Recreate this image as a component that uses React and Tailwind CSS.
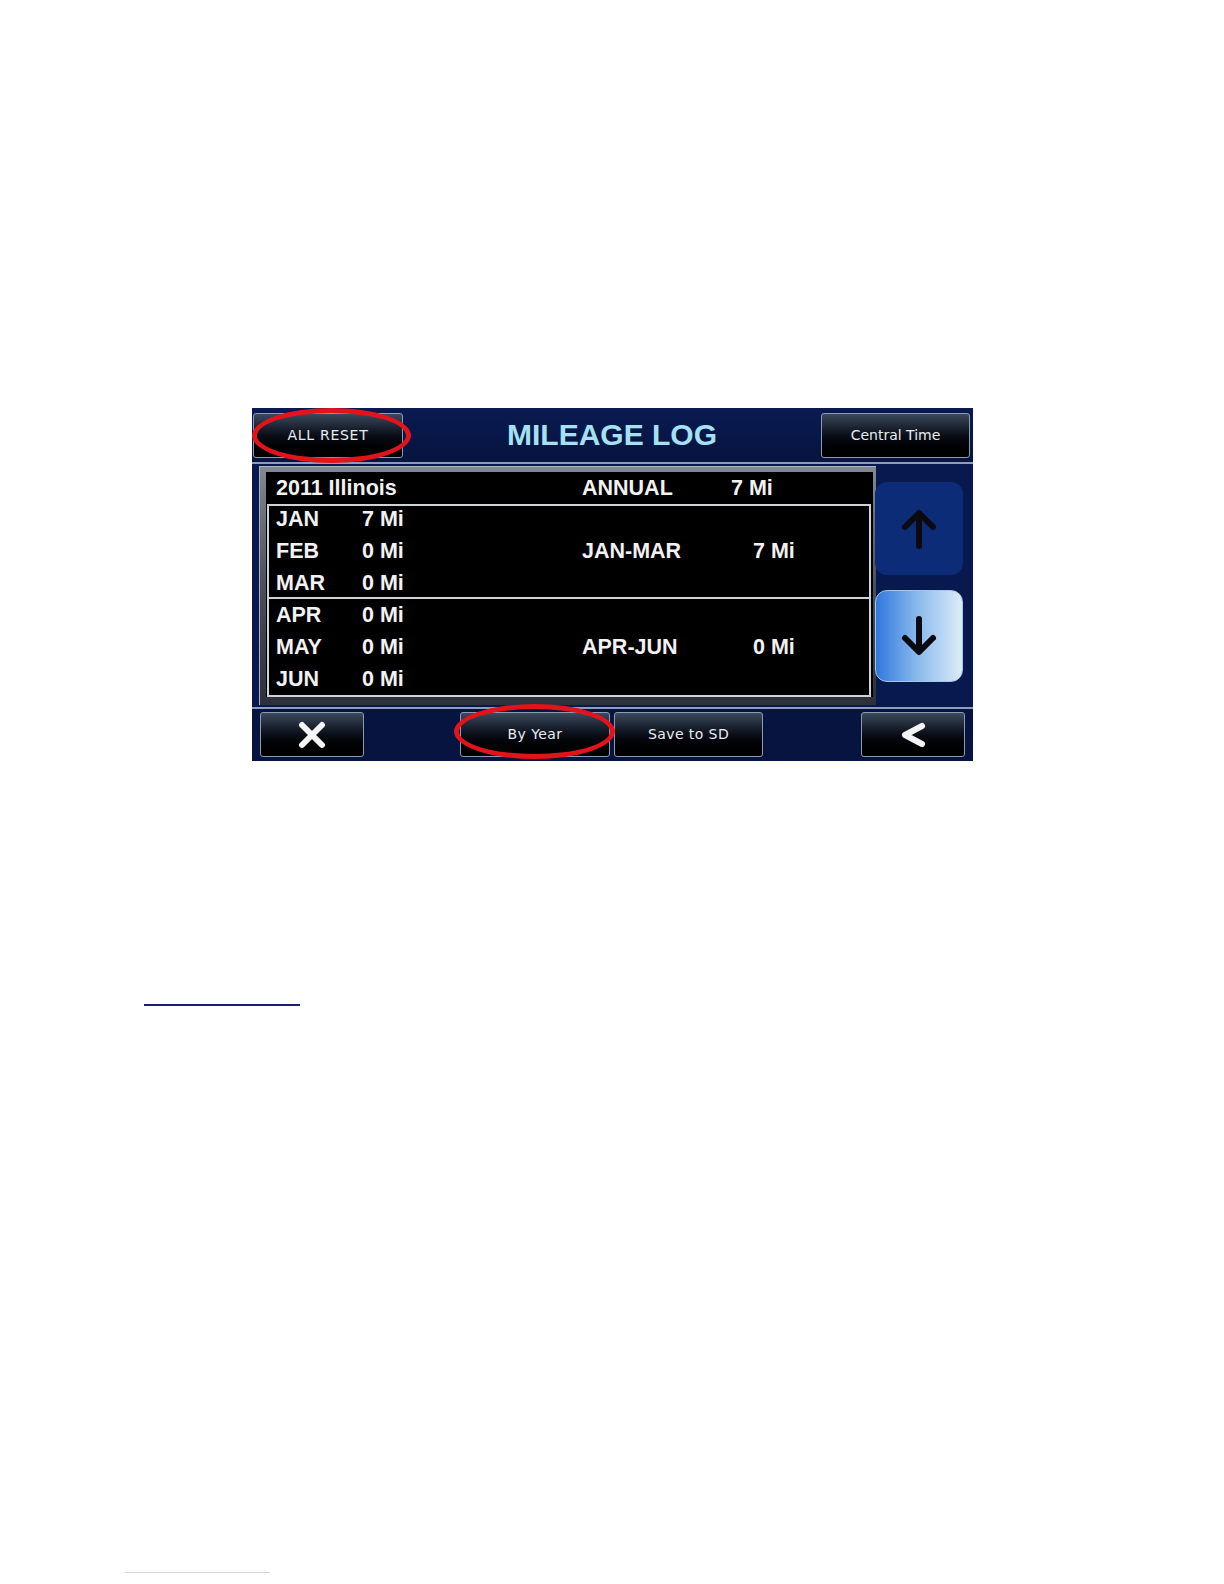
import React from 'react';

const btnFont = { fontFamily: '"DejaVu Sans", "Liberation Sans", sans-serif' };
const tableFont = { fontFamily: '"Liberation Sans", Arial, sans-serif' };

const GlossButton = ({ className = '', children }) => (
    <div
        className={`flex items-center justify-center h-[45px] rounded-[3px] border border-[#8c9ab2] bg-gradient-to-b from-[#3c4a5e] via-[#0a0f18] to-black text-[#e8ecf0] text-[14px] ${className}`}
        style={btnFont}
    >
        {children}
    </div>
);

const Row = ({ month, value }) => (
    <div className="flex items-center h-[32px]">
        <span className="w-[86px]">{month}</span>
        <span>{value}</span>
    </div>
);

const Group = ({ rows, label, total, last }) => (
    <div className={`flex items-start ${last ? 'flex-1 pt-[3px]' : 'h-[93px] border-b-2 border-[#cfd2d6]'}`}>
        <div className="w-[313px] pl-[7px] -mt-[3px]">
            {rows.map(r => <Row key={r[0]} month={r[0]} value={r[1]} />)}
        </div>
        <span className="w-[171px] h-[32px] mt-[29px] flex items-center">{label}</span>
        <span className="h-[32px] mt-[29px] flex items-center">{total}</span>
    </div>
);

const ArrowIcon = ({ down }) => (
    <svg width="40" height="42" viewBox="0 0 40 42" fill="none" stroke="#0a0a10" strokeWidth="6" strokeLinecap="round" strokeLinejoin="round">
        {down ? (
            <>
                <path d="M20 4 V36" />
                <path d="M6 23 L20 37 L34 23" />
            </>
        ) : (
            <>
                <path d="M20 38 V6" />
                <path d="M6 19 L20 5 L34 19" />
            </>
        )}
    </svg>
);

export default function App() {
    return (
        <div className="relative min-h-[1584px] bg-white pt-[408px]">
            {/* Device screen */}
            <div className="relative ml-[252px] w-[721px] h-[353px] flex flex-col bg-[#08174c]">
                {/* Top bar */}
                <div className="h-[54px] flex items-start pt-[5px] bg-gradient-to-b from-[#0a1a52] to-[#07143f]">
                    <GlossButton className="ml-px w-[150px] tracking-[0.05em]">ALL RESET</GlossButton>
                    <div className="flex-1 flex justify-center pt-[2px]">
                        <span className="text-[30px] font-bold leading-[40px] text-[#a4e2f2]" style={tableFont}>MILEAGE LOG</span>
                    </div>
                    <GlossButton className="mr-[3px] w-[149px] text-[13.5px]">Central Time</GlossButton>
                </div>
                <div className="h-[2px] bg-[#8e9cb8]" />

                {/* Middle */}
                <div className="h-[243px] flex bg-[#08194f]">
                    <div className="ml-[7px] mt-[2px] w-[617px] h-[239px] pt-[6px] pb-[8px] pl-[7px] pr-[3px] bg-gradient-to-b from-[#848a93] via-[#4a4f59] to-[#2c3039] shadow-[inset_1px_1px_0_#b0b5bd]">
                        <div className="h-full bg-black flex flex-col text-[21.5px] font-bold text-[#f2f2f2]" style={tableFont}>
                            <div className="flex items-center h-[32px] pl-[10px]">
                                <span className="w-[306px]">2011 Illinois</span>
                                <span className="w-[149px]">ANNUAL</span>
                                <span>7 Mi</span>
                            </div>
                            <div className="flex-1 ml-px mr-[2px] border-2 border-[#cfd2d6] flex flex-col">
                                <Group rows={[['JAN', '7 Mi'], ['FEB', '0 Mi'], ['MAR', '0 Mi']]} label="JAN-MAR" total="7 Mi" />
                                <Group rows={[['APR', '0 Mi'], ['MAY', '0 Mi'], ['JUN', '0 Mi']]} label="APR-JUN" total="0 Mi" last />
                            </div>
                        </div>
                    </div>
                    <div className="-ml-[1px] w-[88px] flex flex-col pt-[18px] gap-[15px]">
                        <div className="h-[93px] rounded-[12px] bg-[#0c2c78] flex items-center justify-center">
                            <ArrowIcon />
                        </div>
                        <div className="h-[92px] rounded-[12px] border border-[#a6c6e6] bg-gradient-to-r from-[#2f78dc] via-[#8cbcec] to-[#dcecf8] flex items-center justify-center">
                            <ArrowIcon down />
                        </div>
                    </div>
                </div>
                <div className="h-[2px] bg-[#8e9cb8]" />

                {/* Bottom bar */}
                <div className="h-[52px] flex items-start pt-[3px] bg-[#07143f]">
                    <GlossButton className="ml-[8px] w-[104px]">
                        <svg width="30" height="28" viewBox="0 0 30 28" stroke="#f4f4f4" strokeWidth="6" strokeLinecap="round">
                            <path d="M5 4 L25 24 M25 4 L5 24" />
                        </svg>
                    </GlossButton>
                    <GlossButton className="ml-[96px] w-[150px] tracking-[0.03em]">By Year</GlossButton>
                    <GlossButton className="ml-[4px] w-[149px] tracking-[0.03em]">Save to SD</GlossButton>
                    <div className="flex-1" />
                    <GlossButton className="mr-[8px] w-[104px]">
                        <svg width="30" height="28" viewBox="0 0 30 28" fill="none" stroke="#f4f4f4" strokeWidth="6" strokeLinecap="round" strokeLinejoin="round">
                            <path d="M24 5 L7 14 L24 23" />
                        </svg>
                    </GlossButton>
                </div>

                {/* Red annotation ellipses */}
                <div className="absolute left-0 top-0 w-[159px] h-[55px] rounded-[50%] border-[5px] border-[#e3131b]" />
                <div className="absolute left-[202px] top-[296px] w-[161px] h-[55px] rounded-[50%] border-[5px] border-[#e3131b]" />
            </div>

            {/* Underlines */}
            <div className="ml-[144px] mt-[243px] w-[156px] h-[2px] bg-[#1c1c7c]" />
            <div className="ml-[125px] mt-[566px] w-[145px] h-px bg-[#d4d4ea]" />
        </div>
    );
}
